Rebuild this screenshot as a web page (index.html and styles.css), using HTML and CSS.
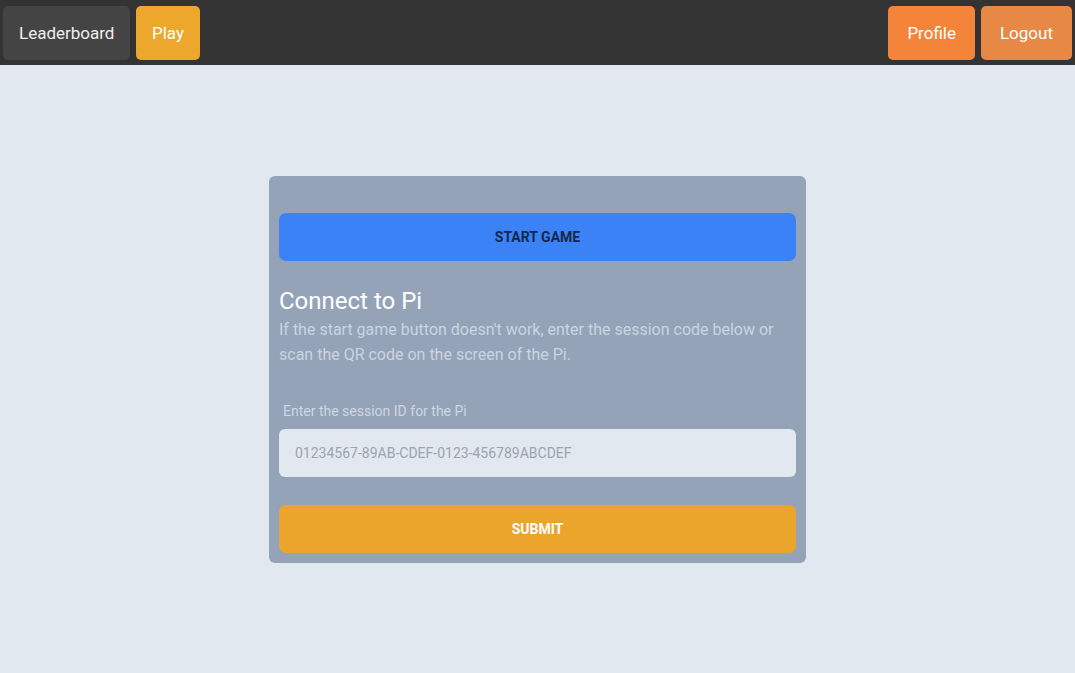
FILE: index.html
```html
<!DOCTYPE html>
<html>
<head>
<meta charset="utf-8">
<link rel="stylesheet" href="styles.css">
</head>
<body>
<nav class="nav">
  <div class="nav-left">
    <a class="nav-btn btn-dark">Leaderboard</a>
    <a class="nav-btn btn-play">Play</a>
  </div>
  <div class="nav-right">
    <a class="nav-btn btn-profile">Profile</a>
    <a class="nav-btn btn-logout">Logout</a>
  </div>
</nav>
<main class="main">
  <section class="card">
    <button class="btn-start">START GAME</button>
    <h2 class="title">Connect to Pi</h2>
    <p class="desc">If the start game button doesn't work, enter the session code below or scan the QR code on the screen of the Pi.</p>
    <label class="label">Enter the session ID for the Pi</label>
    <input class="input" placeholder="01234567-89AB-CDEF-0123-456789ABCDEF">
    <button class="btn-submit">SUBMIT</button>
  </section>
</main>
</body>
</html>
```
FILE: styles.css
```css
* { box-sizing: border-box; }
html, body { margin: 0; padding: 0; }
body {
  font-family: Roboto, "Liberation Sans", sans-serif;
  background: #e2e8f0;
  height: 673px;
  display: flex;
  flex-direction: column;
}
.nav {
  height: 65px;
  background: #333333;
  display: flex;
  justify-content: space-between;
  padding: 6px 3px 5px 3px;
}
.nav-left, .nav-right { display: flex; gap: 6px; }
.nav-btn {
  display: flex;
  align-items: center;
  padding: 0 16px;
  height: 54px;
  border-radius: 5px;
  color: #ffffff;
  font-size: 17px;
}
.nav-right .nav-btn { padding: 0 19px; }
.btn-dark { background: #444444; color: #eeeeee; }
.btn-play { background: #eca72c; padding: 0 15.5px; }
.btn-profile { background: #f4843a; }
.btn-logout { background: #e88845; }
.main {
  flex: 1;
  display: flex;
  align-items: center;
  justify-content: center;
}
.card {
  width: 537px;
  background: #94a3b8;
  border-radius: 6px;
  padding: 37px 10px 10px 10px;
  display: flex;
  flex-direction: column;
}
.btn-start, .btn-submit {
  height: 48px;
  border: none;
  border-radius: 7px;
  font-family: Roboto, "Liberation Sans", sans-serif;
  font-size: 14px;
  font-weight: 700;
}
.btn-start { background: #3b82f6; color: #11294a; }
.btn-submit { background: #eca52c; color: #ffffff; margin-top: 28px; }
.title {
  margin: 26px 0 0 0;
  font-size: 24px;
  font-weight: 400;
  line-height: 28px;
  color: #ffffff;
}
.desc {
  margin: 2px 0 0 0;
  font-size: 16px;
  line-height: 25px;
  color: #cbd5e1;
}
.label {
  margin-top: 35px;
  padding-left: 4px;
  font-size: 14px;
  line-height: 18px;
  color: #cfd7e2;
}
.input {
  margin-top: 9px;
  height: 48px;
  border: none;
  border-radius: 6px;
  background: #e2e8f0;
  padding: 0 16px;
  font-family: Roboto, "Liberation Sans", sans-serif;
  font-size: 14px;
}
.input::placeholder { color: #9ca3af; }
```
